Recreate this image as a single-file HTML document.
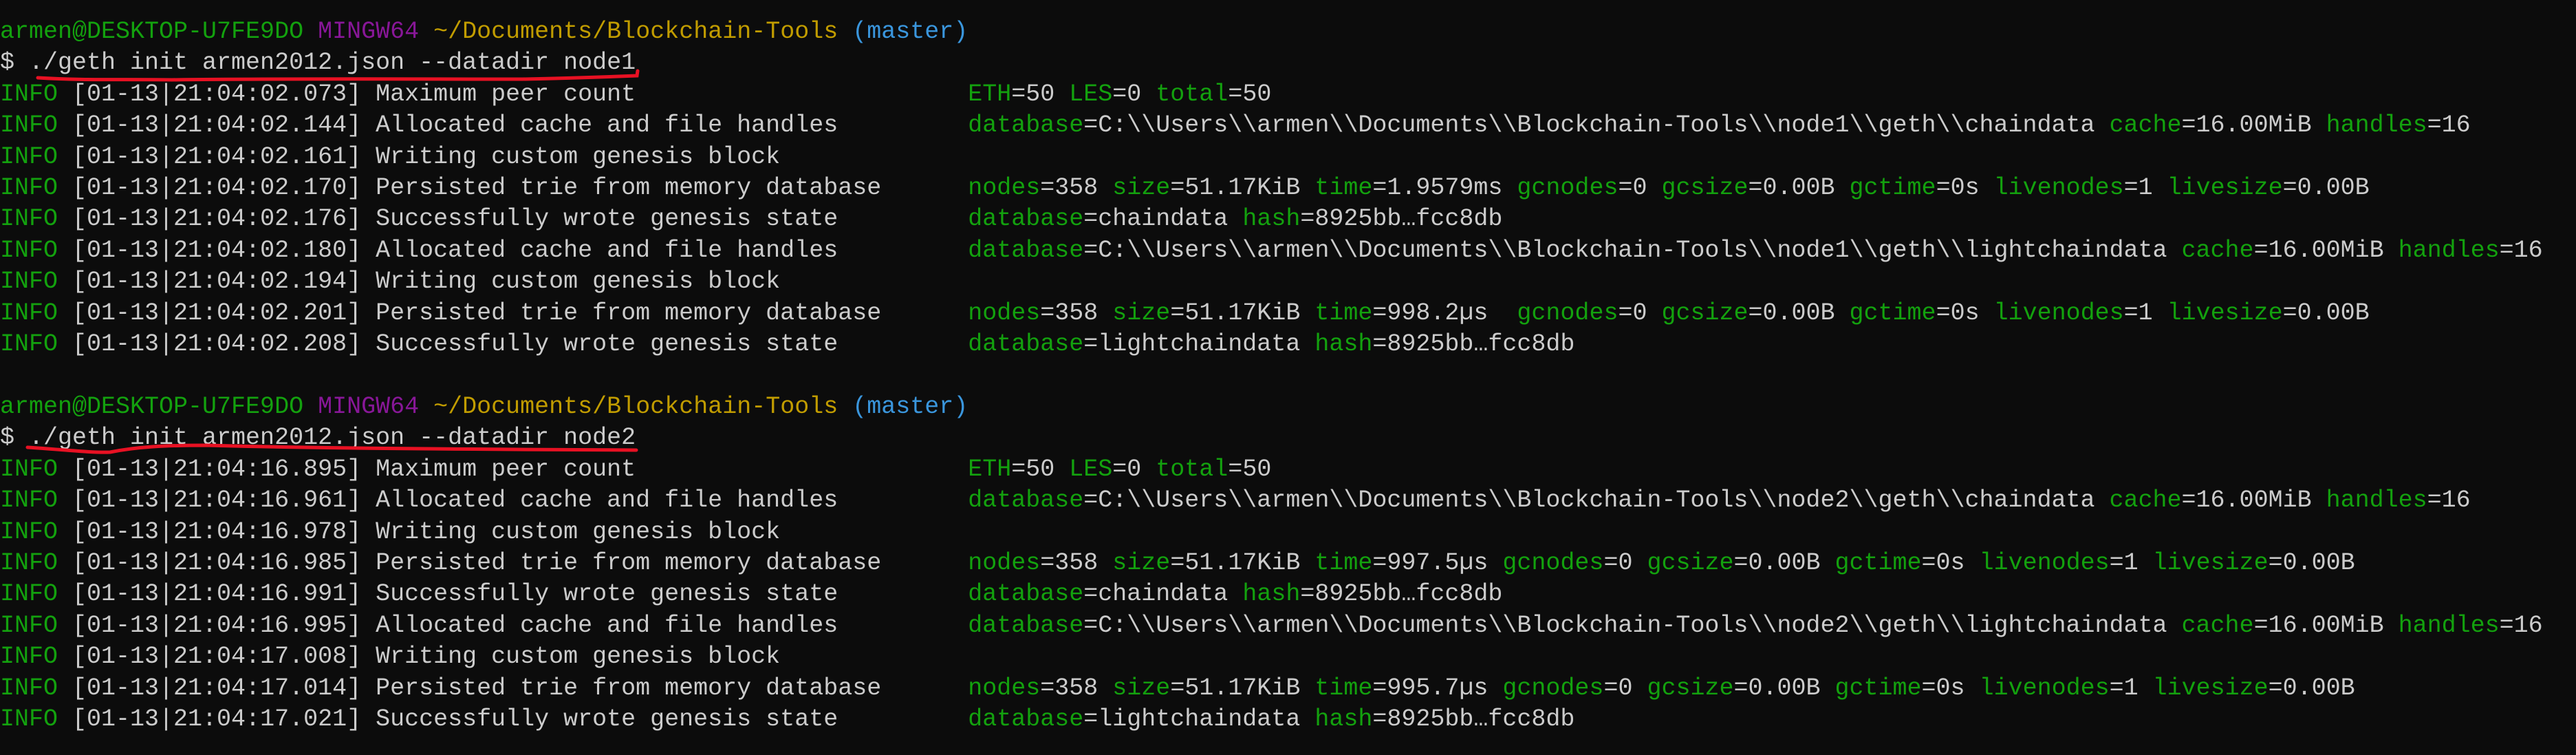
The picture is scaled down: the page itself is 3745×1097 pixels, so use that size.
<!DOCTYPE html>
<html><head><meta charset="utf-8"><style>
html,body{margin:0;padding:0;background:#0c0c0c;width:3745px;height:1097px;overflow:hidden}
pre{margin:0;padding:24px 0 0 0;font-family:"Liberation Mono",monospace;font-size:35px;line-height:45.4px;color:#cccccc;white-space:pre}
.g{color:#13a10e}.p{color:#881798}.y{color:#c19c00}.b{color:#3a96dd}
svg{position:absolute;left:0;top:0}
</style></head><body>
<pre><span class="g">armen@DESKTOP-U7FE9DO</span> <span class="p">MINGW64</span> <span class="y">~/Documents/Blockchain-Tools</span> <span class="b">(master)</span>
$ ./geth init armen2012.json --datadir node1
<span class="g">INFO</span> [01-13|21:04:02.073] Maximum peer count                       <span class="g">ETH</span>=50 <span class="g">LES</span>=0 <span class="g">total</span>=50
<span class="g">INFO</span> [01-13|21:04:02.144] Allocated cache and file handles         <span class="g">database</span>=C:\\Users\\armen\\Documents\\Blockchain-Tools\\node1\\geth\\chaindata <span class="g">cache</span>=16.00MiB <span class="g">handles</span>=16
<span class="g">INFO</span> [01-13|21:04:02.161] Writing custom genesis block
<span class="g">INFO</span> [01-13|21:04:02.170] Persisted trie from memory database      <span class="g">nodes</span>=358 <span class="g">size</span>=51.17KiB <span class="g">time</span>=1.9579ms <span class="g">gcnodes</span>=0 <span class="g">gcsize</span>=0.00B <span class="g">gctime</span>=0s <span class="g">livenodes</span>=1 <span class="g">livesize</span>=0.00B
<span class="g">INFO</span> [01-13|21:04:02.176] Successfully wrote genesis state         <span class="g">database</span>=chaindata <span class="g">hash</span>=8925bb…fcc8db
<span class="g">INFO</span> [01-13|21:04:02.180] Allocated cache and file handles         <span class="g">database</span>=C:\\Users\\armen\\Documents\\Blockchain-Tools\\node1\\geth\\lightchaindata <span class="g">cache</span>=16.00MiB <span class="g">handles</span>=16
<span class="g">INFO</span> [01-13|21:04:02.194] Writing custom genesis block
<span class="g">INFO</span> [01-13|21:04:02.201] Persisted trie from memory database      <span class="g">nodes</span>=358 <span class="g">size</span>=51.17KiB <span class="g">time</span>=998.2µs  <span class="g">gcnodes</span>=0 <span class="g">gcsize</span>=0.00B <span class="g">gctime</span>=0s <span class="g">livenodes</span>=1 <span class="g">livesize</span>=0.00B
<span class="g">INFO</span> [01-13|21:04:02.208] Successfully wrote genesis state         <span class="g">database</span>=lightchaindata <span class="g">hash</span>=8925bb…fcc8db

<span class="g">armen@DESKTOP-U7FE9DO</span> <span class="p">MINGW64</span> <span class="y">~/Documents/Blockchain-Tools</span> <span class="b">(master)</span>
$ ./geth init armen2012.json --datadir node2
<span class="g">INFO</span> [01-13|21:04:16.895] Maximum peer count                       <span class="g">ETH</span>=50 <span class="g">LES</span>=0 <span class="g">total</span>=50
<span class="g">INFO</span> [01-13|21:04:16.961] Allocated cache and file handles         <span class="g">database</span>=C:\\Users\\armen\\Documents\\Blockchain-Tools\\node2\\geth\\chaindata <span class="g">cache</span>=16.00MiB <span class="g">handles</span>=16
<span class="g">INFO</span> [01-13|21:04:16.978] Writing custom genesis block
<span class="g">INFO</span> [01-13|21:04:16.985] Persisted trie from memory database      <span class="g">nodes</span>=358 <span class="g">size</span>=51.17KiB <span class="g">time</span>=997.5µs <span class="g">gcnodes</span>=0 <span class="g">gcsize</span>=0.00B <span class="g">gctime</span>=0s <span class="g">livenodes</span>=1 <span class="g">livesize</span>=0.00B
<span class="g">INFO</span> [01-13|21:04:16.991] Successfully wrote genesis state         <span class="g">database</span>=chaindata <span class="g">hash</span>=8925bb…fcc8db
<span class="g">INFO</span> [01-13|21:04:16.995] Allocated cache and file handles         <span class="g">database</span>=C:\\Users\\armen\\Documents\\Blockchain-Tools\\node2\\geth\\lightchaindata <span class="g">cache</span>=16.00MiB <span class="g">handles</span>=16
<span class="g">INFO</span> [01-13|21:04:17.008] Writing custom genesis block
<span class="g">INFO</span> [01-13|21:04:17.014] Persisted trie from memory database      <span class="g">nodes</span>=358 <span class="g">size</span>=51.17KiB <span class="g">time</span>=995.7µs <span class="g">gcnodes</span>=0 <span class="g">gcsize</span>=0.00B <span class="g">gctime</span>=0s <span class="g">livenodes</span>=1 <span class="g">livesize</span>=0.00B
<span class="g">INFO</span> [01-13|21:04:17.021] Successfully wrote genesis state         <span class="g">database</span>=lightchaindata <span class="g">hash</span>=8925bb…fcc8db
</pre>
<svg width="3745" height="1097">
<path d="M55 113 C120 117 180 115 250 116 C400 114 600 115 760 115 C850 113 900 111 926 110 L927 103" stroke="#e81123" stroke-width="5" fill="none" stroke-linecap="round"/>
<path d="M40 650 C90 653 130 658 160 657 C200 649 240 647 300 647 C450 651 600 652 750 653 C850 654 900 654 925 654" stroke="#e81123" stroke-width="5" fill="none" stroke-linecap="round"/>
</svg>
</body></html>
